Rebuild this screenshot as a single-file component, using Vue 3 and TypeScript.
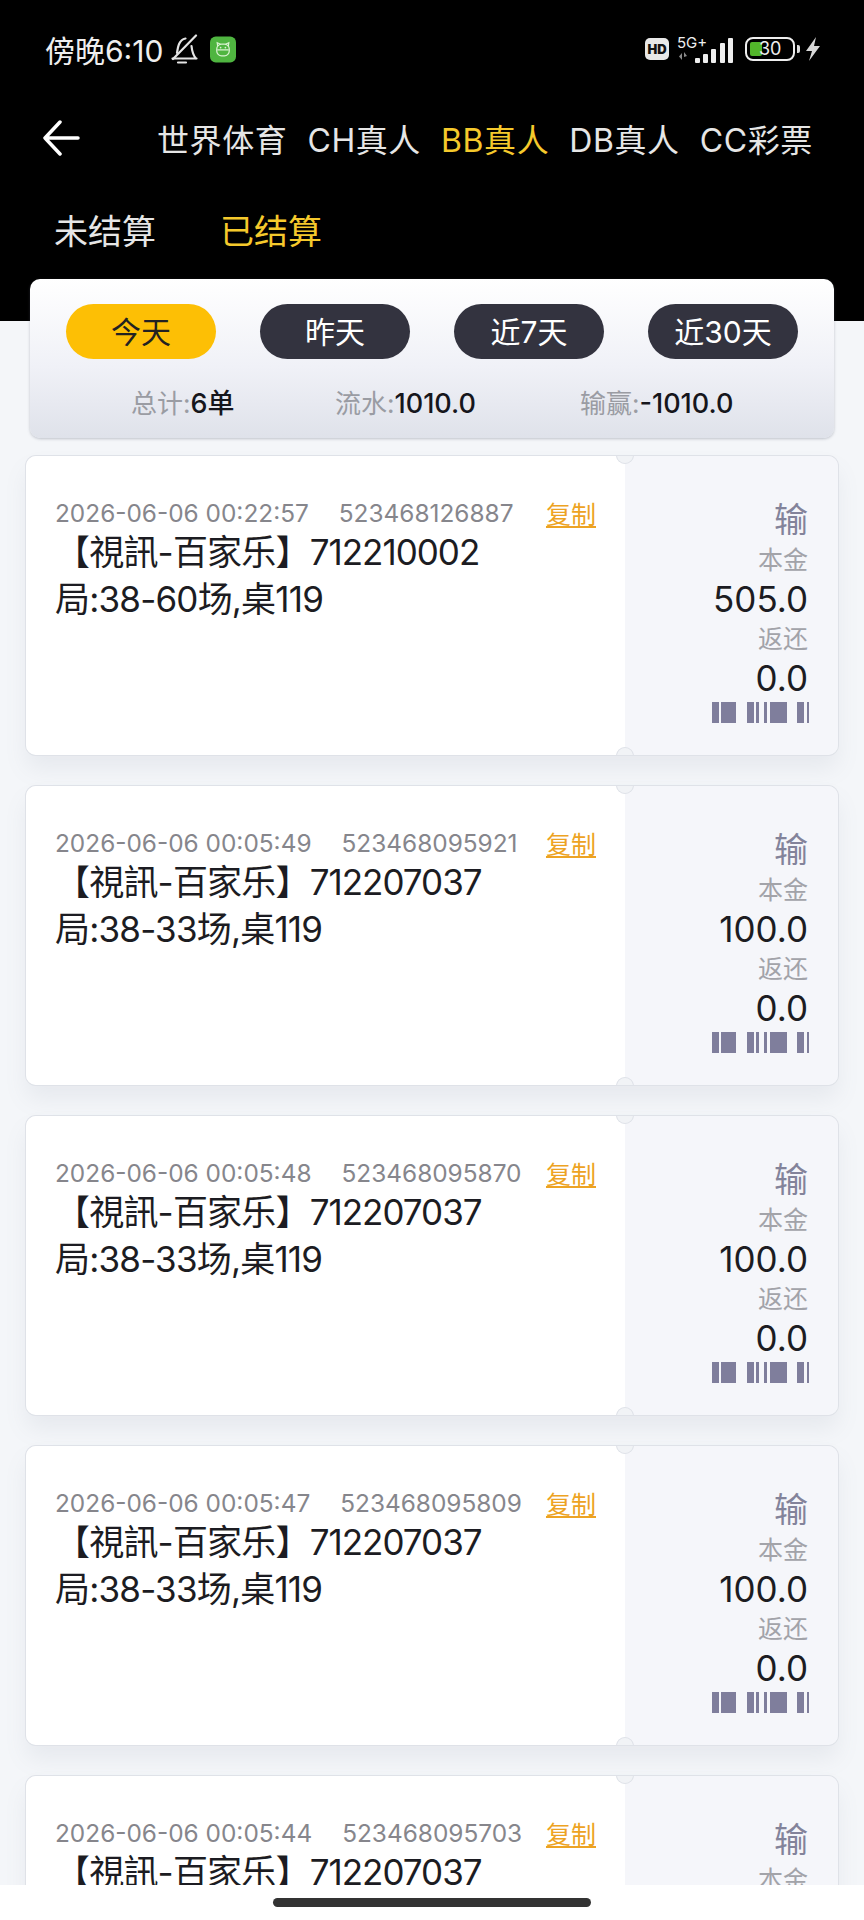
<script setup lang="ts">
const tabs = [
  { label: '世界体育', on: false },
  { label: 'CH真人', on: false },
  { label: 'BB真人', on: true },
  { label: 'DB真人', on: false },
  { label: 'CC彩票', on: false },
]
const ranges = ['今天', '昨天', '近7天', '近30天']

const orders = [
  { time: '2026-06-06 00:22:57', no: '523468126887', game: '712210002', round: '局:38-60场,桌119', stake: '505.0' },
  { time: '2026-06-06 00:05:49', no: '523468095921', game: '712207037', round: '局:38-33场,桌119', stake: '100.0' },
  { time: '2026-06-06 00:05:48', no: '523468095870', game: '712207037', round: '局:38-33场,桌119', stake: '100.0' },
  { time: '2026-06-06 00:05:47', no: '523468095809', game: '712207037', round: '局:38-33场,桌119', stake: '100.0' },
  { time: '2026-06-06 00:05:44', no: '523468095703', game: '712207037', round: '局:38-33场,桌119', stake: '100.0' },
]

// x, width inside the 97px wide barcode
const bars = [
  [0, 7], [9, 15], [35, 7], [44, 3], [52, 3], [58, 17], [85, 7], [95, 2],
]
</script>

<template>
  <div class="page">
    <div class="top">
      <div class="status">
        <div class="status-left">
          <span class="clock">傍晚6:10</span>
          <svg class="bell" width="27" height="30" viewBox="0 0 27 30" fill="none" stroke="#e4e4e4" stroke-width="2.200" stroke-linecap="round">
            <path d="M1.500 24.500H25.500M25 24.500C22 21 21 17 20.500 12" />
            <path d="M6 19C7 12 8 6 14.500 4.500" />
            <path d="M2 25L25 1.500M7 28.500h8" />
          </svg>
          <svg class="app" width="26" height="27" viewBox="0 0 27 27">
            <rect width="27" height="27" rx="6" fill="#4fb540" />
            <rect x="7" y="8" width="13" height="12" rx="5" fill="none" stroke="#d8f2cf" stroke-width="1.300" />
            <path d="M8 10L7.500 6.500 11 8M19 10l.5-3.500L16 8M7.500 14h12" fill="none" stroke="#d8f2cf" stroke-width="1.300" />
            <circle cx="11" cy="11.500" r=".9" fill="#d8f2cf" />
            <circle cx="16" cy="11.500" r=".9" fill="#d8f2cf" />
          </svg>
        </div>
        <div class="status-right">
          <span class="hd">HD</span>
          <div class="net">
            <span class="net-label">5G+</span>
            <svg width="56" height="26" viewBox="0 0 56 26">
              <path d="M5 15v7l-3-3.500zM7 14l3 4-3 1z" fill="#8a8a8a" />
              <rect x="18" y="20" width="5" height="5" rx="1" fill="#eee" />
              <rect x="26" y="16" width="5" height="9" rx="1" fill="#eee" />
              <rect x="34" y="11" width="5" height="14" rx="1" fill="#eee" />
              <rect x="43" y="5" width="5" height="20" rx="1" fill="#eee" />
              <rect x="51" y="0" width="5" height="25" rx="1" fill="#eee" />
            </svg>
          </div>
          <div class="battery">
            <span class="battery-fill"></span>
            <span class="battery-num">30</span>
          </div>
          <span class="battery-cap"></span>
          <svg class="bolt" width="16" height="24" viewBox="0 0 16 24">
            <path d="M11 0L1 14h6l-3 10 11-15H9z" fill="#d8d8d8" />
          </svg>
        </div>
      </div>
      <div class="nav">
        <svg class="back" width="38" height="38" viewBox="0 0 38 38" fill="none" stroke="#fff" stroke-width="3.500" stroke-linecap="round" stroke-linejoin="round">
          <path d="M2 19h33M17 3L2 19l15 16" />
        </svg>
        <div class="tabs">
          <span v-for="t in tabs" :key="t.label" class="tab" :class="{ on: t.on }">{{ t.label }}</span>
        </div>
      </div>
      <div class="settle">
        <span>未结算</span>
        <span class="on">已结算</span>
      </div>
    </div>

    <div class="filter">
      <div class="ranges">
        <span v-for="(r, i) in ranges" :key="r" class="pill" :class="{ on: i === 0 }">{{ r }}</span>
      </div>
      <div class="totals">
        <span class="total"><em>总计:</em>6单</span>
        <span class="total"><em>流水:</em>1010.0</span>
        <span class="total"><em>输赢:</em>-1010.0</span>
      </div>
    </div>

    <div class="list">
      <div v-for="o in orders" :key="o.no" class="ticket">
        <div class="main">
          <div class="meta">
            <span class="time">{{ o.time }}</span>
            <span class="no">{{ o.no }}</span>
            <span class="copy">复制</span>
          </div>
          <div class="title"><span class="bracket">【視訊-百家乐】</span>{{ o.game }}</div>
          <div class="round">{{ o.round }}</div>
        </div>
        <div class="side">
          <span class="result">输</span>
          <span class="label">本金</span>
          <span class="amount">{{ o.stake }}</span>
          <span class="label">返还</span>
          <span class="amount">0.0</span>
          <svg class="barcode" width="97" height="21" viewBox="0 0 97 21">
            <rect v-for="b in bars" :key="b[0]" :x="b[0]" y="0" :width="b[1]" height="21" fill="#7f7e9c" />
          </svg>
        </div>
        <i class="notch notch-top"></i>
        <i class="notch notch-bottom"></i>
      </div>
    </div>

    <div class="home"><span></span></div>
  </div>
</template>

<style>
html,
body {
  margin: 0;
  background: #f4f6f9;
}
</style>

<style scoped>
.page {
  position: relative;
  width: 864px;
  height: 1920px;
  overflow: hidden;
  background: #f4f6f9;
  font-family: Inter, "Noto Sans CJK SC", sans-serif;
}

.top {
  height: 321px;
  box-sizing: border-box;
  background: #000;
  color: #e6e6e6;
}

.status {
  height: 98px;
  box-sizing: border-box;
  padding: 32px 43px 0 45px;
  display: flex;
  justify-content: space-between;
}
.status-left,
.status-right {
  display: flex;
  align-items: center;
  height: 34px;
}
.clock {
  font-size: 30px;
  color: #eee;
}
.bell {
  margin-left: 8px;
}
.app {
  margin-left: 12px;
}
.hd {
  width: 24px;
  height: 22px;
  border-radius: 5px;
  background: #e8e8e8;
  color: #111;
  font-size: 13px;
  font-weight: 900;
  line-height: 22px;
  text-align: center;
}
.net {
  position: relative;
  width: 56px;
  height: 26px;
  margin: 3px 0 0 8px;
}
.net svg {
  display: block;
}
.net-label {
  position: absolute;
  left: 0;
  top: -3px;
  font-size: 15px;
  color: #eee;
  line-height: 16px;
}
.battery {
  position: relative;
  width: 50px;
  height: 24px;
  box-sizing: border-box;
  margin-left: 12px;
  border: 2px solid #eee;
  border-radius: 8px;
}
.battery-fill {
  position: absolute;
  left: 3px;
  top: 3px;
  width: 12px;
  height: 14px;
  border-radius: 2px;
  background: #52b52a;
}
.battery-num {
  position: absolute;
  left: 12px;
  top: 0;
  font-size: 18px;
  line-height: 20px;
  color: #eee;
}
.battery-cap {
  width: 3px;
  height: 8px;
  margin-left: 2px;
  background: #ddd;
  border-radius: 0 2px 2px 0;
}
.bolt {
  margin-left: 5px;
}

.nav {
  display: flex;
  align-items: center;
  height: 80px;
}
.back {
  margin-left: 43px;
}
.tabs {
  display: flex;
  gap: 20px;
  margin-left: 76px;
  font-size: 32px;
  letter-spacing: 0.6px;
}
.tab {
  white-space: nowrap;
}
.tab.on,
.settle .on {
  color: #f5c92c;
}

.settle {
  display: flex;
  gap: 64px;
  padding: 29px 0 0 54px;
  font-size: 34px;
  line-height: 50px;
}

.filter {
  position: relative;
  z-index: 1;
  box-sizing: border-box;
  width: 804px;
  height: 159px;
  margin: -42px 0 0 30px;
  padding: 25px 36px 0;
  border-radius: 10px;
  background: linear-gradient(#ffffff, #f0f1f7 55%, #dfe2ea);
  box-shadow: 0 1px 3px rgba(90, 95, 115, 0.35);
}
.ranges {
  display: flex;
  justify-content: space-between;
}
.pill {
  width: 150px;
  height: 55px;
  border-radius: 28px;
  background: #33333f;
  color: #fff;
  font-size: 30px;
  line-height: 57px;
  text-align: center;
}
.pill.on {
  background: #fdbf05;
  color: #222;
}
.totals {
  position: relative;
  height: 60px;
  margin-top: 15px;
  font-size: 27px;
  font-weight: 500;
  line-height: 60px;
  color: #16161c;
}
.total {
  position: absolute;
  top: 0;
  white-space: nowrap;
}
.total:nth-child(1) { left: 65px; }
.total:nth-child(2) { left: 269px; }
.total:nth-child(3) { left: 514px; }
.total em {
  font-style: normal;
  font-size: 26px;
  font-weight: 400;
  color: #9a9ca3;
}

.list {
  display: flex;
  flex-direction: column;
  gap: 31px;
  width: 812px;
  margin: 18px 0 0 26px;
}
.ticket {
  position: relative;
  flex: none;
  display: flex;
  height: 299px;
  border-radius: 10px;
  overflow: hidden;
  box-shadow: 0 0 0 1px #dfe2e8, 0 14px 22px rgba(120, 128, 150, 0.1);
}
.main {
  width: 599px;
  box-sizing: border-box;
  padding: 42px 29px 0;
  background: #fff;
}
.meta {
  display: flex;
  align-items: center;
  height: 30px;
  font-size: 24.400px;
  color: #86868c;
  white-space: nowrap;
}
.no {
  margin-left: 30px;
}
.copy {
  margin-left: auto;
  color: #eda323;
  font-size: 25px;
  text-decoration: underline;
}
.title,
.round {
  font-size: 35px;
  line-height: 47px;
  color: #1c1c22;
  white-space: nowrap;
}
.title {
  margin-top: 1px;
  letter-spacing: -1px;
}
.round {
  letter-spacing: -0.8px;
}
.bracket {
  letter-spacing: -0.8px;
}
.side {
  flex: 1;
  box-sizing: border-box;
  display: flex;
  flex-direction: column;
  align-items: flex-end;
  padding: 42px 30px 0 0;
  background: #f5f6fa;
}
.result {
  font-size: 34px;
  line-height: 44px;
  color: #83839a;
}
.label {
  font-size: 25px;
  line-height: 36px;
  color: #a2a3a9;
}
.amount {
  font-size: 35px;
  line-height: 43px;
  color: #1c1c22;
}
.barcode {
  margin: 2px -1px 0 0;
}
.notch {
  position: absolute;
  left: 590px;
  width: 18px;
  height: 18px;
  border-radius: 50%;
  background: #f1f3f6;
  box-shadow: inset 0 0 0 1px #dfe2e8;
}
.notch-top {
  top: -10px;
}
.notch-bottom {
  bottom: -10px;
}

.home {
  position: absolute;
  left: 0;
  right: 0;
  bottom: 0;
  z-index: 2;
  height: 35px;
  background: #fff;
}
.home span {
  position: absolute;
  left: 273px;
  top: 13px;
  width: 318px;
  height: 9px;
  border-radius: 5px;
  background: #333;
}
</style>
